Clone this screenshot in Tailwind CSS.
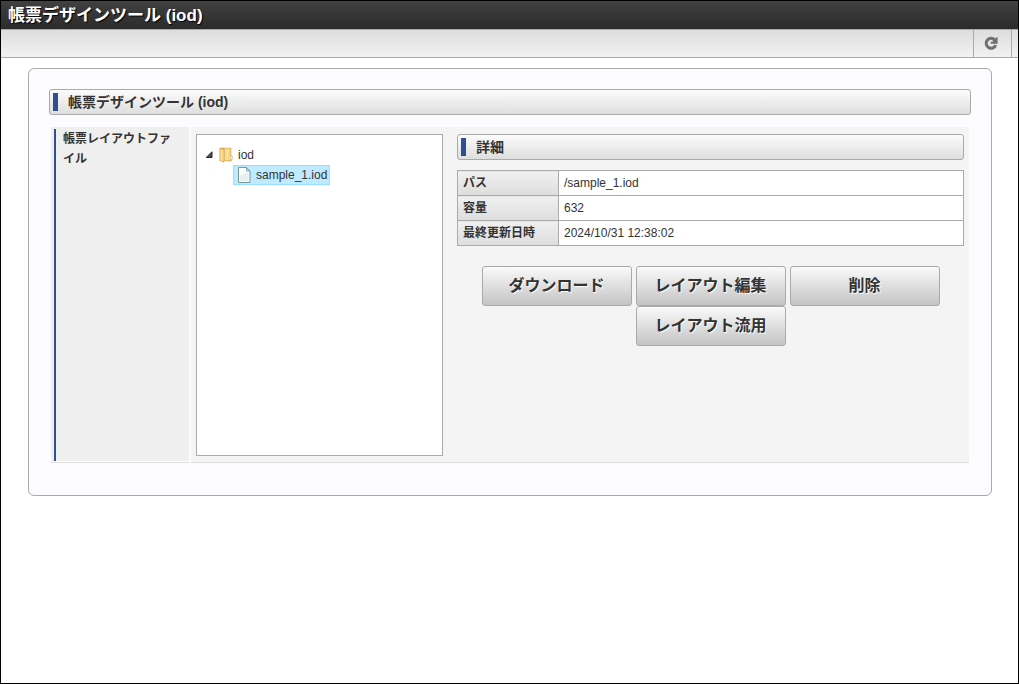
<!DOCTYPE html>
<html lang="ja">
<head>
<meta charset="utf-8">
<meta name="viewport" content="width=device-width, initial-scale=1">
<title>帳票デザインツール (iod)</title>
<script src="https://cdn.jsdelivr.net/npm/@tailwindcss/browser@4"></script>
</head>
<body class="min-h-screen border border-black bg-white font-['Liberation_Sans','Noto_Sans_CJK_JP',sans-serif] text-xs text-[#333]">
<header class="flex h-7 items-center bg-linear-to-b from-[#414141] to-[#2b2b2b] px-[7px] pt-0.5">
  <h1 class="text-[17px] leading-6 font-bold text-white [text-shadow:1px_1px_1px_#000]">帳票デザインツール (iod)</h1>
</header>
<nav class="flex h-[29px] justify-end border-y border-[#aaa] bg-linear-to-b from-[#dddddd] to-[#f2f2f2] pr-1.5">
  <button type="button" aria-label="更新" class="flex w-[39px] items-center justify-center border-x border-[#aaa] pr-1 pb-0.5">
    <svg class="size-3.5" viewBox="0 0 14 14" fill="none"><path d="M10.6 3.6A5 5 0 1 0 11.8 9.2" stroke="#707070" stroke-width="3"/><path d="M13.6 .8V7.7H6.7V5.8H9.2L8.4 4.6Z" fill="#707070"/></svg>
  </button>
</nav>
<main class="mr-[26px] ml-[27px] mt-2.5 rounded-md border border-[#aaa] bg-[#fcfcff] px-5 pt-5 pb-8">
  <h2 class="flex h-[26px] items-center gap-2.5 rounded-[3px] border border-[#aaa] bg-linear-to-b from-[#fcfcfc] to-[#dedede] px-[3px] text-sm font-bold"><span class="h-[18px] w-[5px] bg-[#2f4f94]"></span>帳票デザインツール (iod)</h2>
  <div class="mx-0.5 mt-3 flex gap-0.5">
    <div class="flex w-[138px] shrink-0 flex-col border-b border-[#ddd]">
      <div class="mb-px flex grow bg-[#efefef] pt-0.5 pl-[3px]">
        <div class="grow border-l-2 border-[#2f4f94] pl-[7px] pr-3 text-xs leading-5 font-bold"><h3>帳票レイアウトファイル</h3></div>
      </div>
    </div>
    <div class="flex min-w-0 grow gap-3.5 border-b border-[#ddd] bg-[#f4f4f4] pt-[7px] pr-[5px] pb-1.5 pl-[5px]">
      <div class="h-[322px] w-[247px] shrink-0 border border-[#aaa] bg-white pt-2.5 pl-2">
        <ul role="tree">
          <li role="treeitem" aria-expanded="true">
            <div class="flex h-5 items-center">
              <svg class="size-2" viewBox="0 0 8 8"><path d="M7 .8V6.5H1.2Z" fill="#505050" stroke="#262626"/></svg>
              <svg class="ml-1.5 h-4 w-[14px]" viewBox="0 0 14 16"><path d="M1 .8H12.2V8L13.5 9V12.5L12.2 14.2H5V15.6L.5 13.8V1.3Z" fill="#d9a64f"/><path d="M1.3 1.5L4.6 3V14.6L1.3 13.3Z" fill="#fbdc91"/><path d="M5.6 1.5H11.4V13.4H5.6Z" fill="#f8d890"/><path d="M8 1.5V13.4" stroke="#fbe4ac"/><path d="M12.3 9.2V12.4" stroke="#d8eef2" stroke-width="1.5"/></svg>
              <span class="ml-[5px]">iod</span>
            </div>
            <ul role="group" class="ml-7">
              <li role="treeitem" aria-selected="true" class="flex h-5 w-fit items-center gap-[5px] border border-[#99defd] bg-[#beebff] pr-0.5 pl-1">
                <svg class="h-4 w-[13px]" viewBox="0 0 13 16"><path d="M.5 .5H8.5L12 4V15.5H.5Z" fill="#f8fbfb" stroke="#7c999e"/><path d="M2 14V9L10.5 5V14Z" fill="#e6eff0"/><path d="M8.5 .5V4H12Z" fill="#c9dbdf" stroke="#7c999e" stroke-width=".8"/></svg>
                <span>sample_1.iod</span>
              </li>
            </ul>
          </li>
        </ul>
      </div>
      <section class="min-w-0 grow">
        <h3 class="flex h-[26px] items-center gap-2.5 rounded-[3px] border border-[#aaa] bg-linear-to-b from-[#fcfcfc] to-[#dedede] px-[3px] text-sm font-bold"><span class="h-[18px] w-[5px] bg-[#2f4f94]"></span>詳細</h3>
        <table class="mt-2.5 w-full border-collapse text-left leading-4 [&_td]:h-[25px] [&_td]:border [&_td]:border-[#aaa] [&_td]:bg-white [&_td]:px-[5px] [&_th]:w-[101px] [&_th]:border [&_th]:border-[#aaa] [&_th]:bg-linear-to-b [&_th]:from-[#f0f0f0] [&_th]:to-[#dddddd] [&_th]:px-[5px]">
          <tbody>
            <tr><th scope="row">パス</th><td>/sample_1.iod</td></tr>
            <tr><th scope="row">容量</th><td>632</td></tr>
            <tr><th scope="row">最終更新日時</th><td>2024/10/31 12:38:02</td></tr>
          </tbody>
        </table>
        <div class="mt-5 flex flex-wrap justify-center gap-x-1 text-base font-bold [&>button]:h-10 [&>button]:w-[150px] [&>button]:rounded-[3px] [&>button]:border [&>button]:border-[#aaa] [&>button]:bg-linear-to-b [&>button]:from-[#fafafa] [&>button]:to-[#c4c4c4] [&>button]:[text-shadow:1px_1px_1px_#fff]">
          <button type="button">ダウンロード</button>
          <button type="button">レイアウト編集</button>
          <button type="button">削除</button>
          <button type="button">レイアウト流用</button>
        </div>
      </section>
    </div>
  </div>
</main>
</body>
</html>
